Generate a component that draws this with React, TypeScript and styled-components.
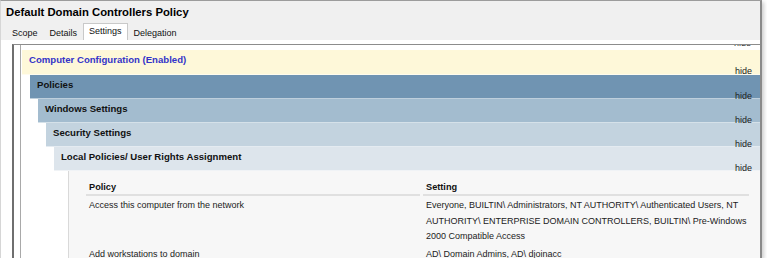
import { createGlobalStyle } from "styled-components";
import styled from "styled-components";

interface Section {
  title: string;
  bg: string;
  color: string;
  indent: number;
  height: number;
}

interface PolicyRow {
  policy: string;
  setting: string;
}

const sections: Section[] = [
  { title: "Computer Configuration (Enabled)", bg: "#fef8d9", color: "#3434c8", indent: 0, height: 25 },
  { title: "Policies", bg: "#7094b2", color: "#111", indent: 8, height: 24 },
  { title: "Windows Settings", bg: "#a3bccf", color: "#111", indent: 16, height: 24 },
  { title: "Security Settings", bg: "#c3d3df", color: "#111", indent: 24, height: 24 },
  { title: "Local Policies/ User Rights Assignment", bg: "#dde5ec", color: "#111", indent: 32, height: 24 },
];

const rows: PolicyRow[] = [
  {
    policy: "Access this computer from the network",
    setting:
      "Everyone, BUILTIN\\ Administrators, NT AUTHORITY\\ Authenticated Users, NT AUTHORITY\\ ENTERPRISE DOMAIN CONTROLLERS, BUILTIN\\ Pre-Windows 2000 Compatible Access",
  },
  { policy: "Add workstations to domain", setting: "AD\\ Domain Admins, AD\\ djoinacc" },
];

const tabs = ["Scope", "Details", "Settings", "Delegation"];

function App() {
  return (
    <>
      <GlobalStyle />
      <Window>
        <Title>Default Domain Controllers Policy</Title>
        <TabStrip>
          {tabs.map((tab) => (
            <Tab key={tab} $active={tab === "Settings"}>
              {tab}
            </Tab>
          ))}
        </TabStrip>
        <TabPage>
          <Scroller>
            <Tree>
              {/* bottom of the previous section's "hide" link, scrolled off */}
              <ClippedHide>
                <HideText>hide</HideText>
              </ClippedHide>
              {sections.map((s) => (
                <Band key={s.title} $bg={s.bg} $indent={s.indent} $height={s.height}>
                  <BandTitle $color={s.color}>{s.title}</BandTitle>
                  <Hide>hide</Hide>
                </Band>
              ))}
              <TableArea>
                <Grid>
                  <HeaderCell>Policy</HeaderCell>
                  <HeaderCell>Setting</HeaderCell>
                  {rows.map((r) => (
                    <Row key={r.policy}>
                      <Cell>{r.policy}</Cell>
                      <Cell>{r.setting}</Cell>
                    </Row>
                  ))}
                </Grid>
              </TableArea>
            </Tree>
          </Scroller>
        </TabPage>
      </Window>
    </>
  );
}

const GlobalStyle = createGlobalStyle`
  body {
    margin: 0;
    background: #ffffff;
    font-family: "Liberation Sans", Arial, sans-serif;
  }
`;

const Window = styled.div`
  box-sizing: border-box;
  width: 762px;
  height: 258px;
  overflow: hidden;
  display: flex;
  flex-direction: column;
  background: #f0f0f0;
  border-top: 1px solid #9c9c9c;
  border-left: 1px solid #d6d6d6;
  border-right: 2px solid #8a8a8a;
  box-shadow: 2px 2px 4px rgba(0, 0, 0, 0.2);
`;

const Title = styled.div`
  flex-shrink: 0;
  padding: 4px 0 0 5px;
  height: 18px;
  font-size: 11.3px;
  font-weight: bold;
  line-height: 14px;
  color: #000;
`;

const TabStrip = styled.div`
  flex-shrink: 0;
  display: flex;
  align-items: flex-end;
  height: 17px;
  padding-left: 5px;
`;

const Tab = styled.div<{ $active: boolean }>`
  box-sizing: border-box;
  padding: 0 5px;
  font-size: 9px;
  color: #111;
  height: ${(p) => (p.$active ? "17px" : "15px")};
  line-height: 15px;
  background: ${(p) => (p.$active ? "#ffffff" : "transparent")};
  border: 1px solid ${(p) => (p.$active ? "#c9c9c9" : "transparent")};
  border-bottom: none;
`;

const TabPage = styled.div`
  flex: 1;
  min-height: 0;
  display: flex;
  background: #ffffff;
  padding: 4px 0 0 11px;
`;

const Scroller = styled.div`
  flex: 1;
  display: flex;
  border-top: 1px solid #8c8c8c;
  border-left: 2px solid #6f6f6f;
`;

const Tree = styled.div`
  flex: 1;
  display: flex;
  flex-direction: column;
  margin-left: 6px;
  padding-left: 1px;
  border-left: 1px solid #a9a9a9;
`;

const ClippedHide = styled.div`
  flex-shrink: 0;
  height: 5px;
  overflow: hidden;
  display: flex;
  justify-content: flex-end;
  align-items: flex-start;
  padding-right: 9px;
`;

const HideText = styled.span`
  display: block;
  margin-top: -6px;
  font-size: 9px;
  line-height: 9px;
  color: #333;
`;

const Band = styled.div<{ $bg: string; $indent: number; $height: number }>`
  flex-shrink: 0;
  margin-left: ${(p) => p.$indent}px;
  height: ${(p) => p.$height}px;
  box-sizing: border-box;
  padding: 3px 8px 0 7px;
  background: ${(p) => p.$bg};
  border-bottom: 1px solid rgba(255, 255, 255, 0.55);
`;

const BandTitle = styled.div<{ $color: string }>`
  font-size: 9.6px;
  font-weight: bold;
  line-height: 13px;
  color: ${(p) => p.$color};
`;

const Hide = styled.div`
  height: 8px;
  text-align: right;
  font-size: 9px;
  line-height: 10px;
  color: #222;
`;

const TableArea = styled.div`
  flex: 1;
  margin-left: 46px;
  background: #f7f7f7;
  border-left: 1px solid #d9d9d9;
  padding: 9px 0 0 17px;
`;

const Grid = styled.div`
  display: grid;
  grid-template-columns: 334px 326px;
  column-gap: 3px;
`;

const HeaderCell = styled.div`
  padding-left: 3px;
  font-size: 9.2px;
  font-weight: bold;
  line-height: 14px;
  color: #111;
  border-bottom: 2px solid #e0e0e0;
`;

const Row = styled.div`
  display: contents;
`;

const Cell = styled.div`
  padding: 2px 0 0 3px;
  font-size: 9px;
  line-height: 15.5px;
  color: #222;
`;

export default App;
